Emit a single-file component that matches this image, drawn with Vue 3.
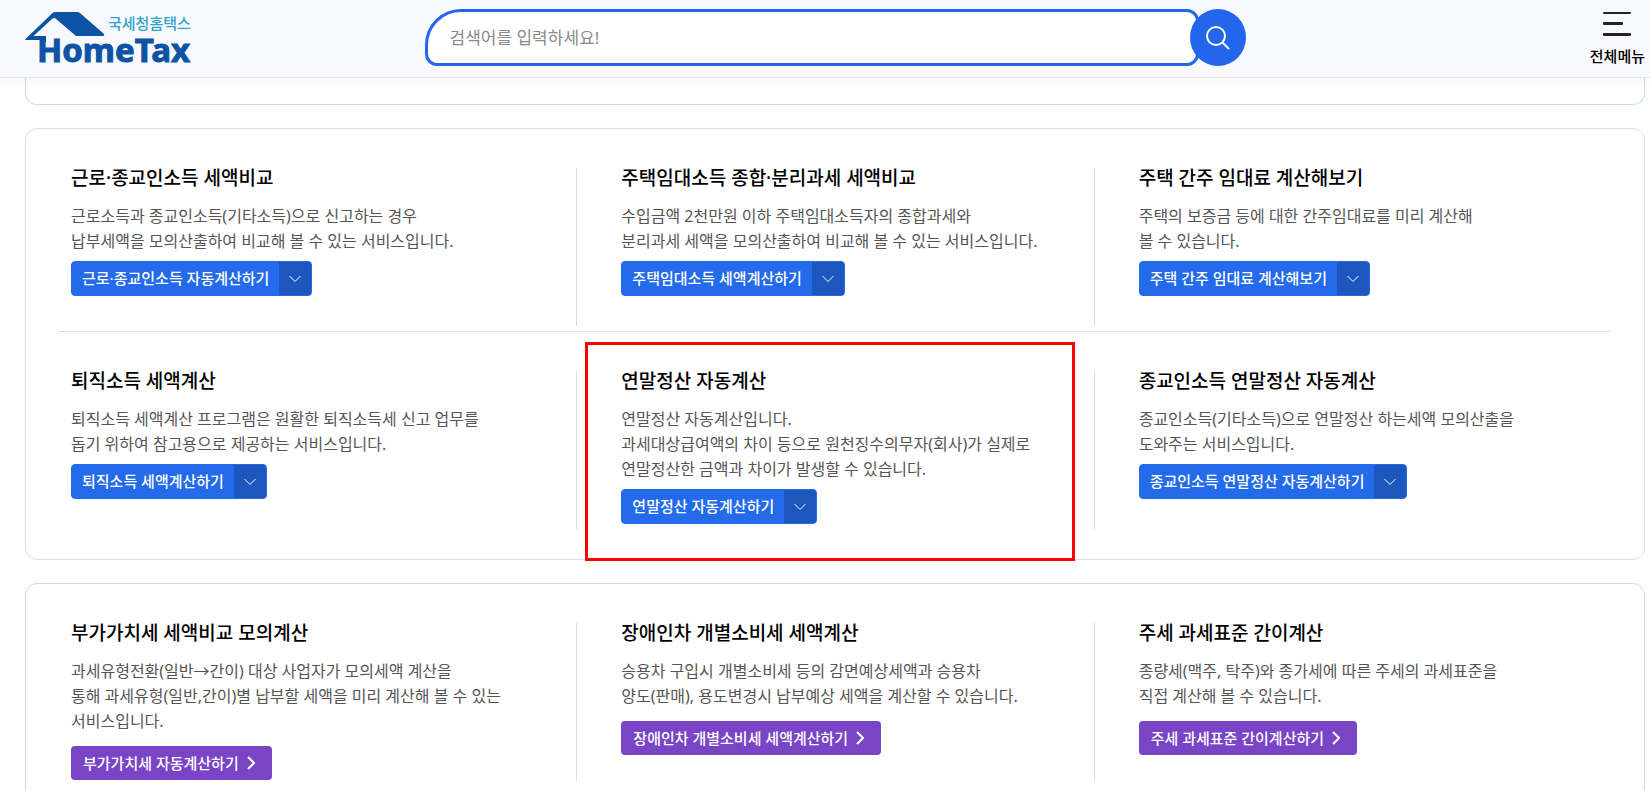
<template>
  <div class="page">
    <header class="header">
      <a href="#" class="logo" aria-label="국세청홈택스 HomeTax">
        <svg width="172" height="62" viewBox="0 0 172 62">
          <path
            d="M1 26.5 L27 1.4 Q28.500 0 30.500 0 H52 Q54 0 55.500 1.400 L78.500 21.500 Q80.500 24 77.500 24 H51 L30.500 6.500 Q29 5.300 27.500 6.500 L8.500 24 H21 V30 H15 V28 H2 Q-1 28 1 26.500 Z"
            fill="#0d53a5"
          />
          <text class="logo-sub" x="83" y="17">국세청홈택스</text>
          <text class="logo-main" x="12" y="50">HomeTax</text>
        </svg>
      </a>

      <form class="search" @submit.prevent>
        <input v-model="keyword" type="text" class="search-input" aria-label="검색어" placeholder="검색어를 입력하세요!" />
        <button type="submit" class="search-btn" aria-label="검색">
          <svg width="26" height="26" viewBox="0 0 26 26" fill="none" stroke="#fff" stroke-width="2">
            <circle cx="11" cy="11" r="9" />
            <path d="M17.500 17.500 L24 24" />
          </svg>
        </button>
      </form>

      <button type="button" class="menu-btn">
        <svg width="28" height="26" viewBox="0 0 28 26" fill="#222">
          <rect x="0" y="1" width="28" height="2" rx="1" />
          <rect x="0" y="11" width="20" height="3" rx="1" />
          <rect x="0" y="22" width="28" height="3" rx="1" />
        </svg>
        <span>전체메뉴</span>
      </button>
    </header>

    <main class="content">
      <section class="card card-teal"></section>

      <section v-for="group in groups" :key="group.theme" class="card" :class="'card-' + group.theme">
        <div v-for="(row, i) in group.rows" :key="i" class="row">
          <article v-for="item in row" :key="item.title" class="item">
            <h3>{{ item.title }}</h3>
            <p>
              <span v-for="line in item.lines" :key="line" class="line">{{ line }}</span>
            </p>
            <div v-if="group.theme === 'blue'" class="split-btn">
              <a href="#">{{ item.button }}</a>
              <button type="button" :aria-label="item.button + ' 펼치기'">
                <svg width="12" height="8" viewBox="0 0 12 8" fill="none" stroke="#fff">
                  <path d="M0.500 1 L6 6.500 L11.500 1" />
                </svg>
              </button>
            </div>
            <a v-else href="#" class="link-btn">
              {{ item.button }}
              <svg width="8" height="14" viewBox="0 0 8 14" fill="none" stroke="#fff" stroke-width="2">
                <path d="M1 1 L7 7 L1 13" />
              </svg>
            </a>
            <div v-if="item.marked" class="marker"></div>
          </article>
        </div>
      </section>
    </main>
  </div>
</template>

<script setup>
import { ref } from 'vue';

const keyword = ref('');

const groups = [
  {
    theme: 'blue',
    rows: [
      [
        {
          title: '근로·종교인소득 세액비교',
          lines: ['근로소득과 종교인소득(기타소득)으로 신고하는 경우', '납부세액을 모의산출하여 비교해 볼 수 있는 서비스입니다.'],
          button: '근로·종교인소득 자동계산하기',
        },
        {
          title: '주택임대소득 종합·분리과세 세액비교',
          lines: ['수입금액 2천만원 이하 주택임대소득자의 종합과세와', '분리과세 세액을 모의산출하여 비교해 볼 수 있는 서비스입니다.'],
          button: '주택임대소득 세액계산하기',
        },
        {
          title: '주택 간주 임대료 계산해보기',
          lines: ['주택의 보증금 등에 대한 간주임대료를 미리 계산해', '볼 수 있습니다.'],
          button: '주택 간주 임대료 계산해보기',
        },
      ],
      [
        {
          title: '퇴직소득 세액계산',
          lines: ['퇴직소득 세액계산 프로그램은 원활한 퇴직소득세 신고 업무를', '돕기 위하여 참고용으로 제공하는 서비스입니다.'],
          button: '퇴직소득 세액계산하기',
        },
        {
          title: '연말정산 자동계산',
          lines: ['연말정산 자동계산입니다.', '과세대상급여액의 차이 등으로 원천징수의무자(회사)가 실제로', '연말정산한 금액과 차이가 발생할 수 있습니다.'],
          button: '연말정산 자동계산하기',
          marked: true,
        },
        {
          title: '종교인소득 연말정산 자동계산',
          lines: ['종교인소득(기타소득)으로 연말정산 하는세액 모의산출을', '도와주는 서비스입니다.'],
          button: '종교인소득 연말정산 자동계산하기',
        },
      ],
    ],
  },
  {
    theme: 'purple',
    rows: [
      [
        {
          title: '부가가치세 세액비교 모의계산',
          lines: ['과세유형전환(일반→간이) 대상 사업자가 모의세액 계산을', '통해 과세유형(일반,간이)별 납부할 세액을 미리 계산해 볼 수 있는', '서비스입니다.'],
          button: '부가가치세 자동계산하기',
        },
        {
          title: '장애인차 개별소비세 세액계산',
          lines: ['승용차 구입시 개별소비세 등의 감면예상세액과 승용차', '양도(판매), 용도변경시 납부예상 세액을 계산할 수 있습니다.'],
          button: '장애인차 개별소비세 세액계산하기',
        },
        {
          title: '주세 과세표준 간이계산',
          lines: ['종량세(맥주, 탁주)와 종가세에 따른 주세의 과세표준을', '직접 계산해 볼 수 있습니다.'],
          button: '주세 과세표준 간이계산하기',
        },
      ],
    ],
  },
];
</script>

<style>
body {
  margin: 0;
  background: #fff;
}
</style>

<style scoped>
.page {
  display: flex;
  flex-direction: column;
  height: 100vh;
  font-family: 'Noto Sans', 'Noto Sans CJK KR', sans-serif;
  color: #000;
}

.page * {
  box-sizing: border-box;
}

a {
  color: inherit;
  text-decoration: none;
}

button {
  padding: 0;
  border: 0;
  font-family: inherit;
  cursor: pointer;
}

svg {
  display: block;
}

.header {
  position: relative;
  z-index: 1;
  flex: none;
  display: grid;
  grid-template-columns: 1fr minmax(0, 821px) 1fr;
  align-items: start;
  height: 78px;
  padding: 9px 5px 0 25px;
  box-sizing: border-box;
  background: #f8f9fe;
  border-bottom: 1px solid #e2e4e8;
  box-shadow: 0 4px 8px rgba(0, 0, 0, 0.04);
}

.logo {
  justify-self: start;
  padding-top: 3px;
}

.logo-sub {
  font-size: 15px;
  font-weight: 500;
  fill: #2ea3c9;
}

.logo-main {
  font-size: 33px;
  font-weight: 700;
  fill: #0d53a5;
  stroke: #0d53a5;
  stroke-width: 1px;
}

.search {
  display: flex;
}

.search-input {
  flex: 1;
  min-width: 0;
  height: 57px;
  margin-right: -9px;
  padding: 0 22px;
  border: 3px solid #2466eb;
  border-radius: 36px 12px 12px 12px;
  background: #fff;
  font-family: inherit;
  font-size: 17px;
  color: #222;
  outline: none;
}

.search-input::placeholder {
  color: #8a8a8a;
}

.search-btn {
  position: relative;
  display: flex;
  align-items: center;
  justify-content: center;
  width: 56px;
  height: 57px;
  border-radius: 50%;
  background: #2466eb;
}

.menu-btn {
  justify-self: end;
  display: flex;
  flex-direction: column;
  align-items: center;
  gap: 9px;
  padding-top: 2px;
  background: none;
  color: #000;
  font-size: 15px;
  font-weight: 500;
  line-height: 20px;
}

.content {
  flex: 1;
  min-height: 0;
  display: flex;
  flex-direction: column;
  gap: 23px;
  padding: 0 5px 0 25px;
  overflow-y: auto;
  scrollbar-width: none;
}

.card {
  flex: none;
  padding: 39px 33px 30px;
  border: 1px solid #d3def5;
  border-radius: 12px;
}

.card-teal {
  padding: 26px 0 0;
  border-color: #bfe2e6;
  border-top: 0;
  border-radius: 0 0 12px 12px;
}

.card-purple {
  border-color: #d9d0ec;
}

.row {
  display: grid;
  grid-template-columns: repeat(3, 1fr);
}

.row + .row {
  margin-top: 5px;
  padding-top: 39px;
  border-top: 1px solid #dcdde0;
}

.item {
  position: relative;
  min-height: 158px;
  padding-left: 44px;
  border-left: 1px solid #dcdde0;
}

.item:first-child {
  padding-left: 12px;
  border-left: 0;
}

h3 {
  margin: 0 0 16px;
  font-size: 19px;
  font-weight: 500;
  line-height: 20px;
}

p {
  margin: 0;
  color: #555;
  font-size: 16px;
  line-height: 25px;
}

.line {
  display: block;
  white-space: nowrap;
}

.split-btn {
  display: inline-flex;
  height: 35px;
  margin-top: 7px;
  border: 1px solid #246beb;
  border-radius: 4px;
  background: #246beb;
  overflow: hidden;
  color: #fff;
  font-size: 15px;
  font-weight: 500;
  line-height: 33px;
  vertical-align: top;
}

.split-btn a {
  padding: 0 10px;
}

.split-btn button {
  display: flex;
  align-items: center;
  justify-content: center;
  width: 32px;
  background: #1d56bc;
}

.link-btn {
  display: inline-flex;
  align-items: center;
  gap: 8px;
  height: 34px;
  margin-top: 12px;
  padding: 0 17px 0 12px;
  border-radius: 4px;
  background: #7944c6;
  color: #fff;
  font-size: 15px;
  font-weight: 500;
  line-height: 34px;
  vertical-align: top;
}

/* highlight frame drawn over the item */
.marker {
  position: absolute;
  inset: -29px 19px -32px 8px;
  border: 3px solid #f00;
  pointer-events: none;
}
</style>
